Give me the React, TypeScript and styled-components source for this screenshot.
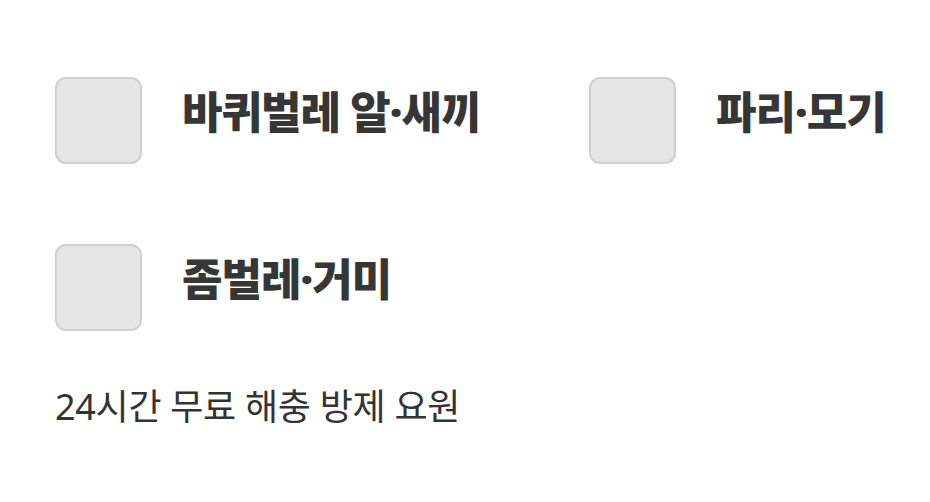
import React from "react";
import styled, { createGlobalStyle } from "styled-components";

const GlobalStyle = createGlobalStyle`
  html, body {
    margin: 0;
    padding: 0;
    background: #ffffff;
  }
  body {
    font-family: "Noto Sans", "Noto Sans CJK KR", sans-serif;
    color: #333333;
  }
`;

const Page = styled.main`
  width: 930px;
  height: 502px;
  box-sizing: border-box;
  padding: 77px 0 0 55px;
`;

const Options = styled.div`
  display: grid;
  grid-template-columns: 534px 300px;
  row-gap: 80px;
`;

const Option = styled.label`
  display: flex;
  align-items: center;
  gap: 40px;
  cursor: pointer;
`;

const Box = styled.span<{ $checked?: boolean }>`
  flex: none;
  width: 87px;
  height: 87px;
  box-sizing: border-box;
  border: 2px solid #cfcfcf;
  border-radius: 11px;
  background: ${(p) => (p.$checked ? "#3a3a3a" : "#e6e6e6")};
`;

const Label = styled.span`
  padding-bottom: 18px;
  font-size: 44px;
  font-weight: 900;
  line-height: 1;
  letter-spacing: -1px;
  color: #363636;
  white-space: nowrap;
`;

const Note = styled.p`
  margin: 58px 0 0;
  font-size: 36px;
  font-weight: 400;
  line-height: 1;
  letter-spacing: -0.3px;
  color: #333333;
`;

const pests = ["바퀴벌레 알·새끼", "파리·모기", "좀벌레·거미"];

export default function App() {
  return (
    <>
      <GlobalStyle />
      <Page>
        <Options>
          {pests.map((name) => (
            <Option key={name}>
              <Box />
              <Label>{name}</Label>
            </Option>
          ))}
        </Options>
        <Note>24시간 무료 해충 방제 요원</Note>
      </Page>
    </>
  );
}
